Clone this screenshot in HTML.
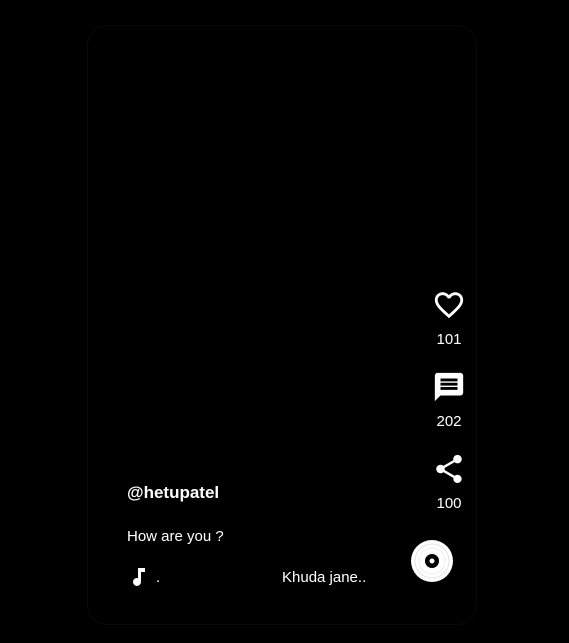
<!DOCTYPE html>
<html><head><style>
html,body{margin:0;padding:0;background:#000;width:569px;height:643px;overflow:hidden;font-family:"Liberation Sans",sans-serif;color:#fff}
.card{position:absolute;left:87px;top:25px;width:388px;height:598px;border-radius:20px;border:1px solid #0a0a0a;background:#000}
.t{position:absolute;white-space:nowrap}
.ic{position:absolute}
.n{position:absolute;width:60px;text-align:center;font-size:15px;left:419px}
</style></head><body>
<div class="card"></div>
<svg class="ic" style="left:432px;top:288px" width="34" height="34" viewBox="0 0 24 24"><path fill="#fff" d="M16.5 3c-1.74 0-3.410.81-4.5 2.09C10.91 3.81 9.24 3 7.5 3 4.42 3 2 5.42 2 8.5c0 3.78 3.4 6.86 8.550 11.54L12 21.35l1.45-1.32C18.6 15.36 22 12.28 22 8.5 22 5.42 19.58 3 16.5 3zm-4.4 15.55l-.1.1-.1-.1C7.14 14.24 4 11.390 4 8.5 4 6.5 5.5 5 7.5 5c1.54 0 3.040.99 3.57 2.36h1.87C13.46 5.99 14.96 5 16.5 5c2 0 3.5 1.5 3.5 3.5 0 2.89-3.14 5.74-7.9 10.05z"/></svg>
<div class="n" style="top:331px">101</div>
<svg class="ic" style="left:432px;top:370px" width="34" height="34" viewBox="0 0 24 24"><path fill="#fff" d="M21.99 4c0-1.1-.89-2-1.99-2H4c-1.1 0-2 .9-2 2v12c0 1.1.9 2 2 2h14l4 4-.01-18zM18 14H6v-2h12v2zm0-3H6V9h12v2zm0-3H6V6h12v2z" transform="translate(24,0) scale(-1,1)"/></svg>
<div class="n" style="top:413px">202</div>
<svg class="ic" style="left:432px;top:452px" width="34" height="34" viewBox="0 0 24 24"><path fill="#fff" d="M18 16.08c-.76 0-1.44.3-1.96.77L8.91 12.7c.05-.23.09-.46.09-.7s-.04-.47-.09-.7l7.05-4.11c.54.5 1.25.81 2.040.81 1.66 0 3-1.34 3-3s-1.34-3-3-3-3 1.34-3 3c0 .24.04.47.09.7L8.04 9.81C7.5 9.31 6.79 9 6 9c-1.66 0-3 1.34-3 3s1.34 3 3 3c.79 0 1.5-.31 2.04-.81l7.12 4.16c-.05.21-.08.43-.08.65 0 1.61 1.31 2.92 2.92 2.92s2.92-1.31 2.92-2.92-1.31-2.92-2.92-2.92z"/></svg>
<div class="n" style="top:495px">100</div>
<div class="t" style="left:127px;top:483px;font-size:17px;font-weight:bold">@hetupatel</div>
<div class="t" style="left:127px;top:528px;font-size:15px">How are you ?</div>
<svg class="ic" style="left:131px;top:567px" width="16" height="20" viewBox="0 0 16 20"><path fill="#fff" d="M7 1h7v4H10v10a4 4 0 1 1-3-3.9z"/></svg>
<div class="t" style="left:156px;top:569px;font-size:15px">.</div>
<div class="t" style="left:282px;top:569px;font-size:15px">Khuda jane..</div>
<svg class="ic" style="left:410px;top:539px" width="44" height="44" viewBox="0 0 44 44"><circle cx="22" cy="22" r="21" fill="#fff"/><circle cx="22" cy="22" r="17" fill="none" stroke="#e4e4e4" stroke-width="1"/><circle cx="22" cy="22" r="13" fill="none" stroke="#eee" stroke-width="1"/><circle cx="22" cy="22" r="7" fill="#000"/><circle cx="22" cy="22" r="2.5" fill="#fff"/></svg>
</body></html>
